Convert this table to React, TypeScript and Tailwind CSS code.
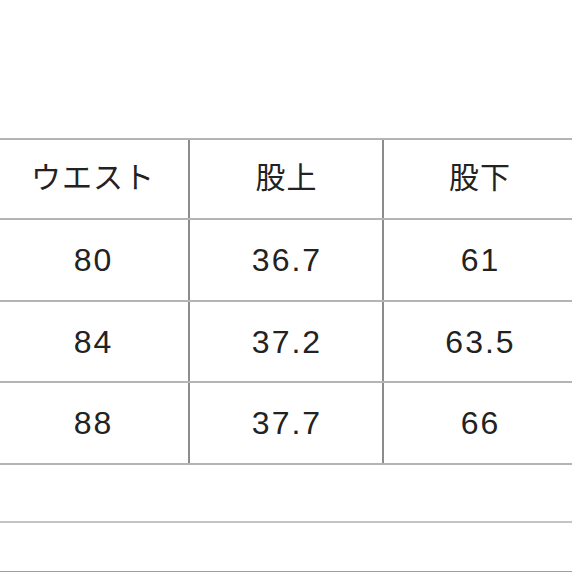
import React from 'react';

const rows = [
  ['80', '36.7', '61'],
  ['84', '37.2', '63.5'],
  ['88', '37.7', '66'],
];

const headers = ['ウエスト', '股上', '股下'];

export default function App() {
  return (
    <div
      className="w-[572px] h-[572px] overflow-hidden bg-white text-[#222]"
      style={{ fontFamily: '"Liberation Sans", "Noto Sans CJK JP", sans-serif' }}
    >
      <div className="pt-[138px]">
        <div className="-ml-[5px] w-[582px] border-t-2 border-[#b4b4b4]">
          {/* header row */}
          <div className="grid grid-cols-[195px_194px_193px] h-[80px] border-b-2 border-[#b4b4b4]">
            {headers.map((h, i) => (
              <div
                key={h}
                className={`flex items-center justify-center pb-[3px] pl-[1px] text-[30px] tracking-[1px] border-r-2 border-[#8c8c8c] ${i === 0 ? 'border-l-2' : ''}`}
              >
                {h}
              </div>
            ))}
          </div>
          {rows.map((r, ri) => (
            <div
              key={r[0]}
              className={`grid grid-cols-[195px_194px_193px] border-b-2 border-[#b4b4b4] ${ri === 1 ? 'h-[81px]' : 'h-[82px]'}`}
            >
              {r.map((v, i) => (
                <div
                  key={i}
                  className={`flex items-center justify-center pl-[2px] text-[32px] tracking-[2px] border-r-2 border-[#8c8c8c] ${i === 0 ? 'border-l-2' : ''}`}
                >
                  {v}
                </div>
              ))}
            </div>
          ))}
        </div>
        <div className="h-[58px] border-b-2 border-[#c4c4c4]" />
        <div className="h-[50px] border-b-2 border-[#a0a0a0]" />
      </div>
    </div>
  );
}
